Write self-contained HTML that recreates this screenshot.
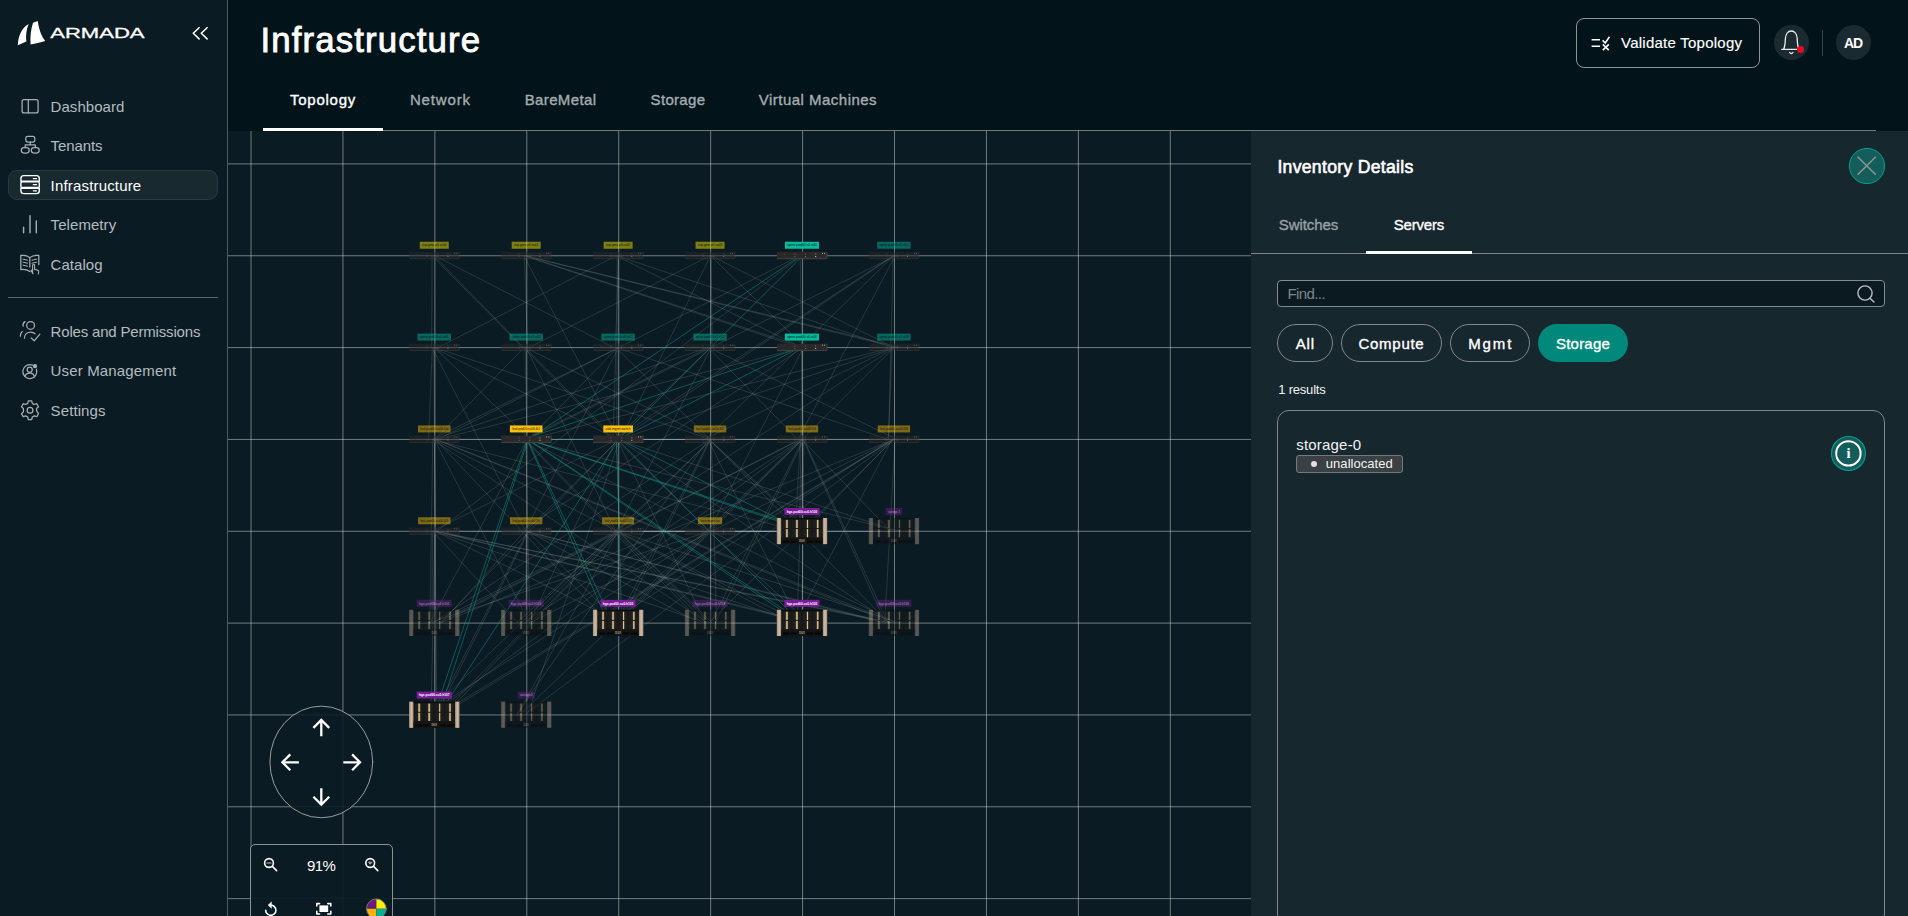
<!DOCTYPE html>
<html lang="en"><head><meta charset="utf-8"><title>Infrastructure</title>
<style>
html,body{margin:0;padding:0}
body{width:1908px;height:916px;overflow:hidden;background:#02131a;position:relative;font-family:"Liberation Sans", sans-serif;}
.t{position:absolute;white-space:nowrap;display:block}
.abs{position:absolute}
svg{position:absolute;overflow:visible}
</style></head><body>

<nav><div class="abs" style="left:0;top:0;width:227px;height:916px;background:#0b1b23;border-right:1px solid #525c61"></div>
<svg style="left:0;top:0" width="227" height="60" viewBox="0 0 227 60">
<path d="M17.8,45.2 C18.2,35.5 22,27.5 28.6,24 C26.3,30 25.6,36 26.4,41.6 Z" fill="#fff"/>
<path d="M33,22.8 L37.7,21 C38.8,29 41.3,36 45.2,41 C40.5,42.6 35.5,43.8 30.6,44.6 C30,37 30.9,29 33,22.8 Z" fill="#fff"/>
<text x="50.2" y="38" font-family="Liberation Sans, sans-serif" font-size="14.9" font-weight="400" fill="#fff" stroke="#fff" stroke-width="0.3" textLength="94.4" lengthAdjust="spacingAndGlyphs">ARMADA</text>
<path d="M199.6,27.2 L193.3,33.3 L199.6,39.4 M207.6,27.2 L201.3,33.3 L207.6,39.4" fill="none" stroke="#fff" stroke-width="1.5"/>
</svg>
<div class="abs" style="left:8px;top:170px;width:208px;height:28px;border:1px solid #2b3a42;border-radius:9px;background:#192930"></div>
<span id="n1" class="t" style="left:50.60px;top:95.90px;height:21px;line-height:21px;font-size:15px;font-weight:400;color:#b4bcc0;letter-spacing:0.039px;">Dashboard</span>
<span id="n2" class="t" style="left:50.60px;top:134.60px;height:21px;line-height:21px;font-size:15px;font-weight:400;color:#b4bcc0;letter-spacing:-0.108px;">Tenants</span>
<span id="n3" class="t" style="left:50.60px;top:174.90px;height:21px;line-height:21px;font-size:15px;font-weight:400;color:#fff;letter-spacing:0.171px;">Infrastructure</span>
<span id="n4" class="t" style="left:50.60px;top:214.40px;height:21px;line-height:21px;font-size:15px;font-weight:400;color:#b4bcc0;letter-spacing:0.071px;">Telemetry</span>
<span id="n5" class="t" style="left:50.60px;top:253.90px;height:21px;line-height:21px;font-size:15px;font-weight:400;color:#b4bcc0;letter-spacing:0.049px;">Catalog</span>
<span id="n6" class="t" style="left:50.60px;top:320.90px;height:21px;line-height:21px;font-size:15px;font-weight:400;color:#b4bcc0;letter-spacing:-0.180px;">Roles and Permissions</span>
<span id="n7" class="t" style="left:50.60px;top:360.40px;height:21px;line-height:21px;font-size:15px;font-weight:400;color:#b4bcc0;letter-spacing:0.157px;">User Management</span>
<span id="n8" class="t" style="left:50.60px;top:399.90px;height:21px;line-height:21px;font-size:15px;font-weight:400;color:#b4bcc0;letter-spacing:0.100px;">Settings</span>
<div class="abs" style="left:8px;top:297px;width:210px;height:1px;background:#5a6469"></div>
<svg style="left:0;top:90px" width="60" height="340" viewBox="0 90 60 340" fill="none" stroke="#a7afb3" stroke-width="1.25" stroke-linecap="round" stroke-linejoin="round">
<!-- dashboard -->
<rect x="22.1" y="99.7" width="16" height="13.2" rx="2"/><path d="M28.3,99.7V112.9"/>
<!-- tenants -->
<rect x="25.8" y="136.3" width="9" height="5.8" rx="2"/><rect x="21.3" y="147.6" width="7.9" height="5.4" rx="2.7"/><rect x="31.3" y="147.6" width="7.9" height="5.4" rx="2.7"/>
<path d="M30.3,142.1V144.9M25.2,147.6V144.9H35.3V147.6"/>
<!-- infrastructure (active) -->
<g stroke="#fff" stroke-width="1.4">
<path d="M20.9,181.2V178.4Q20.9,175.6 23.7,175.6H36.5Q39.3,175.6 39.3,178.4V181.2Z"/>
<rect x="20.9" y="181.9" width="18.4" height="5.6" rx="1"/>
<path d="M20.9,188.2H39.3V190.8Q39.3,193.6 36.5,193.6H23.7Q20.9,193.6 20.9,190.8Z"/>
<path d="M33.3,178.6H36.6M33.3,184.7H36.6M33.3,190.8H36.6" stroke-width="1.2"/>
</g>
<!-- telemetry -->
<path d="M23.6,227.3V232.8M30,215.8V232.8M36.3,221V232.8" stroke-width="1.4"/>
<!-- catalog -->
<path d="M29.8,257.6C27.5,255.6 24,255 20.8,255.4V269.6C24,269.2 27.3,269.8 29.8,271.6M29.8,257.6C32,255.6 35.6,255 38.8,255.4V264.6M29.8,257.6V267"/>
<path d="M23,259.2L27.6,260.2M23,262.2L27.6,263.2M23,265.2L27.6,266.2M32,260.2L36.6,259.2M32,263.2L36.6,262.2" stroke-width="1"/>
<path d="M32.6,272.6V265.3Q32.6,264.2 33.6,264.2Q34.6,264.2 34.6,265.3V269.4L37.8,270.3Q38.9,270.7 38.7,271.9L38.3,274" stroke-width="1.1"/>
<path d="M32.6,269.8L31,270.6L33,273.8" stroke-width="1.1"/>
<!-- roles -->
<circle cx="30.6" cy="325.4" r="3.9"/>
<path d="M24.4,338.2C24.4,334.4 27.2,332 30.6,332C32.3,332 33.9,332.6 35,333.7"/>
<path d="M25,321.6C23.4,322.6 22.7,324.4 23.2,326.2M22.3,331.6C20.9,332.6 20.3,334.2 20.3,336.2"/>
<path d="M31.2,338L34.2,340.8L39.9,334.2"/>
<!-- user mgmt -->
<path d="M32.5,365.1A7,7 0 1 0 36.4,369.2"/>
<circle cx="29.7" cy="369.7" r="2.5"/>
<path d="M25,376.5C25.4,374.2 27.3,373 29.7,373C32.1,373 34,374.2 34.4,376.5"/>
<circle cx="35" cy="366.2" r="1.5" fill="#a7afb3"/>
<!-- settings -->
<circle cx="30" cy="410.2" r="2.9"/>
<path d="M28.3,400.8H31.7L32.3,403.4L34.3,404.5L36.8,403.7L38.5,406.7L36.6,408.5V410.9L38.5,413.7L36.8,416.7L34.3,415.9L32.3,417L31.7,419.6H28.3L27.7,417L25.7,415.9L23.2,416.7L21.5,413.7L23.4,411.9V408.5L21.5,406.7L23.2,403.7L25.7,404.5L27.7,403.4Z"/>
</svg>
</nav>
<header><div class="abs" style="left:228px;top:0;width:1680px;height:131px;background:#02131a"></div>
<span id="title" class="t" style="left:260.60px;top:14.54px;height:49px;line-height:49px;font-size:34.8px;font-weight:400;color:#fff;letter-spacing:1.108px;-webkit-text-stroke:0.84px #fff;">Infrastructure</span>
<div class="abs" style="left:263px;top:130px;width:1613px;height:1px;background:#737b7e"></div>
<div class="abs" style="left:263px;top:128px;width:120px;height:3px;background:#fff"></div>
<span id="tb1" class="t" style="left:290.00px;top:89.10px;height:21px;line-height:21px;font-size:15px;font-weight:400;color:#fff;letter-spacing:0.750px;-webkit-text-stroke:0.36px #fff;">Topology</span>
<span id="tb2" class="t" style="left:409.90px;top:89.10px;height:21px;line-height:21px;font-size:15px;font-weight:400;color:#a5acaf;letter-spacing:0.864px;-webkit-text-stroke:0.36px #a5acaf;">Network</span>
<span id="tb3" class="t" style="left:524.70px;top:89.10px;height:21px;line-height:21px;font-size:15px;font-weight:400;color:#a5acaf;letter-spacing:0.366px;-webkit-text-stroke:0.36px #a5acaf;">BareMetal</span>
<span id="tb4" class="t" style="left:650.60px;top:89.10px;height:21px;line-height:21px;font-size:15px;font-weight:400;color:#a5acaf;letter-spacing:0.309px;-webkit-text-stroke:0.36px #a5acaf;">Storage</span>
<span id="tb5" class="t" style="left:758.80px;top:89.10px;height:21px;line-height:21px;font-size:15px;font-weight:400;color:#a5acaf;letter-spacing:0.478px;-webkit-text-stroke:0.36px #a5acaf;">Virtual Machines</span>
<div class="abs" style="left:1576px;top:18px;width:182px;height:48px;border:1px solid #8d9497;border-radius:8px"></div>
<svg style="left:1586px;top:30px" width="30" height="26" viewBox="1586 30 30 26" fill="none" stroke="#fff" stroke-width="1.5">
<path d="M1591.6,39.7H1600M1591.6,46.3H1600"/>
<path d="M1602.6,40.4L1605.2,43L1609.5,36.8" stroke-width="1.6"/>
<path d="M1602.8,44.4L1608.8,50.2M1608.8,44.4L1602.8,50.2" stroke-width="1.6"/>
</svg>
<span id="vt" class="t" style="left:1621.00px;top:32.30px;height:21px;line-height:21px;font-size:15px;font-weight:400;color:#fff;letter-spacing:0.247px;-webkit-text-stroke:0.15px #fff;">Validate Topology</span>
<div class="abs" style="left:1774px;top:25px;width:35px;height:35px;border-radius:50%;background:#1b2a31"></div>
<svg style="left:1774px;top:25px" width="35" height="35" viewBox="1774 25 35 35" fill="none" stroke="#e9eced" stroke-width="1.3" stroke-linecap="round">
<path d="M1781.8,49.4H1800.6M1783.6,49.2C1785.2,46 1785.2,43 1785.4,38.6C1785.6,34 1788,31 1791.3,31C1794.6,31 1797,34 1797.2,38.6C1797.4,43 1797.4,46 1799,49.2"/>
<path d="M1789.6,52.4Q1791.3,54.6 1793,52.4"/>
<circle cx="1800.5" cy="49.4" r="3.5" fill="#e30d1c" stroke="none"/>
</svg>
<div class="abs" style="left:1822px;top:30px;width:1px;height:26px;background:#39454b"></div>
<div class="abs" style="left:1836px;top:25px;width:35px;height:35px;border-radius:50%;background:#1b2a31"></div>
<span id="ad" class="t" style="left:1844.00px;top:33.15px;height:20px;line-height:20px;font-size:14px;font-weight:700;color:#fff;letter-spacing:-1.200px;">AD</span>
</header>
<main>
<div class="abs" style="left:228px;top:131px;width:1023px;height:785px;overflow:hidden;background:#0b1b23">
<svg style="left:0;top:0" width="1023" height="785" viewBox="228 131 1023 785" font-family="Liberation Sans, sans-serif">
<defs>
<linearGradient id="bz" x1="0" x2="1" y1="0" y2="0"><stop offset="0" stop-color="#9c8a76"/><stop offset="0.5" stop-color="#d2bfa9"/><stop offset="1" stop-color="#a8947e"/></linearGradient>
<linearGradient id="gb" x1="0" x2="1" y1="0" y2="0"><stop offset="0" stop-color="#6e5a38"/><stop offset="0.5" stop-color="#e0cfa8"/><stop offset="1" stop-color="#80683f"/></linearGradient>
<g id="srvd">
<rect x="-25.2" y="-13.1" width="50.4" height="26.2" fill="#171717"/>
<rect x="-25.2" y="-13.1" width="4.4" height="26.2" fill="url(#bz)"/>
<rect x="20.8" y="-13.1" width="4.4" height="26.2" fill="url(#bz)"/>
<rect x="-20.8" y="-13.1" width="41.6" height="1.2" fill="#0c0c0c"/>
<g fill="#1d1d1d"><rect x="-19.6" y="-11.4" width="8.6" height="8.6"/><rect x="-9.6" y="-11.4" width="8.6" height="8.6"/><rect x="0.8" y="-11.4" width="8.6" height="8.6"/><rect x="10.8" y="-11.4" width="8.6" height="8.6"/>
<rect x="-19.6" y="-2.2" width="8.6" height="8.6"/><rect x="-9.6" y="-2.2" width="8.6" height="8.6"/><rect x="0.8" y="-2.2" width="8.6" height="8.6"/><rect x="10.8" y="-2.2" width="8.6" height="8.6"/></g>
<g fill="url(#gb)"><rect x="-16.3" y="-11.2" width="2.4" height="8.2"/><rect x="-6.3" y="-11.2" width="2.4" height="8.2"/><rect x="4.6" y="-11.2" width="1.7" height="8.2"/><rect x="14.6" y="-11.2" width="2.2" height="8.2"/>
<rect x="-16.3" y="-2" width="2.4" height="8.2"/><rect x="-6.3" y="-2" width="2.4" height="8.2"/><rect x="4.6" y="-2" width="1.7" height="8.2"/><rect x="14.6" y="-2" width="2.2" height="8.2"/></g>
<rect x="-20.8" y="6.8" width="41.6" height="6.3" fill="#141414"/>
<g fill="#060606"><rect x="-19" y="9.6" width="6.6" height="2"/><rect x="-11.2" y="9.6" width="6.6" height="2"/><rect x="4.8" y="9.6" width="6.6" height="2"/><rect x="12.6" y="9.6" width="6.6" height="2"/></g>
<text x="0" y="11.4" font-size="2.6" font-weight="700" fill="#b9a98c" text-anchor="middle">DGX</text>
</g>
<g id="swd">
<rect x="-25" y="-3.6" width="50" height="7.2" fill="#292929"/>
<path d="M-25,3.3H25V-3.6" fill="none" stroke="#565656" stroke-width="0.6"/>
<g fill="#7c7c7c"><rect x="-7.5" y="-1.7" width="0.8" height="0.9"/><rect x="3.3" y="-1.7" width="0.8" height="0.9"/><rect x="13.2" y="-2" width="1" height="1.2"/><rect x="-17.6" y="-1.6" width="0.8" height="0.8" opacity="0.5"/></g>
<g fill="#d6d6d6"><rect x="-7.5" y="0.7" width="0.8" height="0.8" opacity="0.6"/><rect x="3.3" y="0.7" width="0.8" height="0.8" opacity="0.7"/><rect x="13.2" y="0.6" width="1" height="1"/><rect x="20" y="-2.6" width="0.9" height="0.9"/><rect x="22.2" y="-2.6" width="0.9" height="0.9"/></g>
<rect x="20.6" y="0.7" width="1.3" height="0.8" fill="#8c1616"/>
</g>
</defs>
<path d="M251.00,131V916M342.93,131V916M434.86,131V916M526.79,131V916M618.72,131V916M710.65,131V916M802.58,131V916M894.51,131V916M986.44,131V916M1078.37,131V916M1170.30,131V916M228,163.91H1251M228,255.75H1251M228,347.59H1251M228,439.43H1251M228,531.27H1251M228,623.11H1251M228,714.95H1251M228,806.79H1251M228,898.63H1251" stroke="#fff" stroke-opacity="0.42" stroke-width="1" fill="none"/>
<g stroke="#d5e2e6" stroke-opacity="0.14" stroke-width="1" fill="none"><path d="M432.1,255.8L431.6,347.6"/><path d="M432.2,255.8L522.7,347.6"/><path d="M434.9,255.8L613.9,347.6"/><path d="M524.5,255.8L527.5,347.6"/><path d="M524.2,255.8L800.2,347.6"/><path d="M525.3,255.8L804.7,347.6"/><path d="M524.9,255.8L896.8,347.6"/><path d="M526.0,255.8L900.9,347.6"/><path d="M616.0,255.8L438.2,347.6"/><path d="M618.7,255.8L615.4,347.6"/><path d="M616.0,255.8L801.8,347.6"/><path d="M617.1,255.8L892.4,347.6"/><path d="M709.8,255.8L528.9,347.6"/><path d="M711.2,255.8L712.2,347.6"/><path d="M710.5,255.8L805.4,347.6"/><path d="M711.1,255.8L893.9,347.6"/><path d="M799.6,255.8L437.9,439.4"/><path d="M800.2,255.8L803.2,439.4"/><path d="M801.7,255.8L436.8,531.3"/><path d="M895.1,255.8L798.0,439.4"/><path d="M893.2,255.8L888.5,439.4"/><path d="M893.7,255.8L705.4,439.4"/><path d="M895.3,255.8L526.8,439.4"/><path d="M432.3,347.6L428.6,439.4"/><path d="M434.6,347.6L529.8,439.4"/><path d="M433.7,347.6L435.6,531.3"/><path d="M432.1,347.6L525.7,531.3"/><path d="M434.7,347.6L711.1,439.4"/><path d="M525.1,347.6L527.0,439.4"/><path d="M525.4,347.6L712.0,439.4"/><path d="M526.2,347.6L615.9,531.3"/><path d="M524.0,347.6L434.7,439.4"/><path d="M618.5,347.6L432.1,439.4"/><path d="M617.4,347.6L528.6,439.4"/><path d="M615.7,347.6L710.1,439.4"/><path d="M618.4,347.6L525.2,531.3"/><path d="M616.6,347.6L888.0,439.4"/><path d="M708.4,347.6L797.7,439.4"/><path d="M709.3,347.6L896.8,439.4"/><path d="M708.3,347.6L524.5,439.4"/><path d="M711.1,347.6L616.0,531.3"/><path d="M708.1,347.6L433.2,439.4"/><path d="M802.3,347.6L437.8,439.4"/><path d="M802.0,347.6L800.9,439.4"/><path d="M803.4,347.6L708.6,531.3"/><path d="M803.0,347.6L520.6,531.3"/><path d="M892.6,347.6L528.1,439.4"/><path d="M893.2,347.6L704.3,439.4"/><path d="M892.0,347.6L888.4,439.4"/><path d="M893.9,347.6L710.6,531.3"/><path d="M894.1,347.6L614.1,531.3"/><path d="M431.8,439.4L800.0,531.3"/><path d="M432.8,439.4L429.8,623.1"/><path d="M434.2,439.4L529.6,623.1"/><path d="M435.4,439.4L608.8,623.1"/><path d="M432.3,439.4L707.7,623.1"/><path d="M433.3,439.4L801.8,623.1"/><path d="M435.5,439.4L891.7,623.1"/><path d="M436.6,439.4L896.3,623.1"/><path d="M434.3,439.4L436.9,714.9"/><path d="M527.1,439.4L429.9,623.1"/><path d="M525.9,439.4L529.8,623.1"/><path d="M524.3,439.4L701.9,623.1"/><path d="M525.4,439.4L706.1,623.1"/><path d="M524.9,439.4L896.8,623.1"/><path d="M708.4,439.4L807.1,531.3"/><path d="M709.3,439.4L810.1,531.3"/><path d="M709.7,439.4L432.8,623.1"/><path d="M711.4,439.4L525.0,623.1"/><path d="M709.8,439.4L616.4,623.1"/><path d="M710.7,439.4L620.0,623.1"/><path d="M711.4,439.4L716.6,623.1"/><path d="M708.1,439.4L799.2,623.1"/><path d="M709.5,439.4L888.9,623.1"/><path d="M711.3,439.4L425.7,714.9"/><path d="M800.3,439.4L795.3,531.3"/><path d="M801.1,439.4L799.3,531.3"/><path d="M799.9,439.4L437.1,623.1"/><path d="M800.6,439.4L440.1,623.1"/><path d="M801.6,439.4L523.5,623.1"/><path d="M801.6,439.4L610.2,623.1"/><path d="M802.6,439.4L614.0,623.1"/><path d="M802.9,439.4L710.7,623.1"/><path d="M803.9,439.4L715.2,623.1"/><path d="M803.1,439.4L797.0,623.1"/><path d="M803.8,439.4L802.0,623.1"/><path d="M803.0,439.4L885.5,623.1"/><path d="M803.8,439.4L888.2,623.1"/><path d="M802.8,439.4L431.3,714.9"/><path d="M893.0,439.4L804.0,531.3"/><path d="M894.1,439.4L440.6,623.1"/><path d="M893.4,439.4L529.6,623.1"/><path d="M892.2,439.4L608.5,623.1"/><path d="M893.6,439.4L708.8,623.1"/><path d="M892.1,439.4L794.9,623.1"/><path d="M895.1,439.4L884.7,623.1"/><path d="M893.3,439.4L437.8,714.9"/><path d="M894.2,439.4L441.4,714.9"/><path d="M434.2,531.3L791.2,531.3"/><path d="M432.5,531.3L431.9,623.1"/><path d="M432.5,531.3L518.3,623.1"/><path d="M435.3,531.3L622.4,623.1"/><path d="M434.3,531.3L706.7,623.1"/><path d="M435.7,531.3L806.3,623.1"/><path d="M436.7,531.3L810.7,623.1"/><path d="M435.0,531.3L890.6,623.1"/><path d="M436.0,531.3L895.0,623.1"/><path d="M434.8,531.3L431.0,714.9"/><path d="M435.6,531.3L434.6,714.9"/><path d="M523.7,531.3L797.7,531.3"/><path d="M524.6,531.3L441.2,623.1"/><path d="M526.3,531.3L526.0,623.1"/><path d="M527.7,531.3L619.3,623.1"/><path d="M527.6,531.3L699.5,623.1"/><path d="M524.7,531.3L798.6,623.1"/><path d="M525.2,531.3L884.8,623.1"/><path d="M526.1,531.3L888.6,623.1"/><path d="M527.6,531.3L434.1,714.9"/><path d="M528.6,531.3L436.7,714.9"/><path d="M618.0,531.3L805.4,531.3"/><path d="M616.3,531.3L432.2,623.1"/><path d="M618.1,531.3L516.3,623.1"/><path d="M617.7,531.3L618.5,623.1"/><path d="M618.2,531.3L709.7,623.1"/><path d="M619.0,531.3L712.2,623.1"/><path d="M616.6,531.3L791.8,623.1"/><path d="M617.2,531.3L900.0,623.1"/><path d="M619.6,531.3L441.2,714.9"/><path d="M620.4,531.3L444.9,714.9"/><path d="M711.4,531.3L519.8,714.9"/><path d="M894.3,439.4L524.1,714.9"/><path d="M618.0,531.3L517.4,714.9"/><path d="M708.4,439.4L516.2,714.9"/><path d="M709.3,531.3L895.6,531.3"/><path d="M801.8,439.4L890.9,531.3"/><path d="M527.7,531.3L901.0,531.3"/><path d="M524.1,439.4L899.9,531.3"/><path d="M709.0,531.3L428.4,623.1"/><path d="M709.9,531.3L619.1,623.1"/><path d="M708.5,531.3L809.6,623.1"/><path d="M707.7,531.3L424.4,714.9"/><path d="M434.3,255.8L613.1,439.4"/><path d="M524.0,255.8L618.9,439.4"/><path d="M617.1,255.8L616.9,439.4"/><path d="M710.5,255.8L620.5,439.4"/><path d="M893.1,255.8L614.7,439.4"/><path d="M894.1,255.8L619.7,439.4"/><path d="M433.1,347.6L617.6,439.4"/><path d="M525.4,347.6L615.8,439.4"/><path d="M615.9,347.6L613.0,439.4"/><path d="M710.3,347.6L615.1,439.4"/><path d="M894.3,347.6L619.1,439.4"/><path d="M617.1,439.4L435.5,439.4"/><path d="M619.3,439.4L708.4,439.4"/><path d="M616.9,439.4L800.0,439.4"/><path d="M616.6,439.4L891.5,439.4"/><path d="M617.2,439.4L432.1,531.3"/><path d="M618.8,439.4L525.6,531.3"/><path d="M616.3,439.4L619.7,531.3"/><path d="M615.7,439.4L709.2,531.3"/><path d="M617.8,439.4L897.9,531.3"/><path d="M618.6,439.4L440.3,623.1"/><path d="M616.2,439.4L529.4,623.1"/><path d="M617.2,439.4L705.5,623.1"/><path d="M619.3,439.4L890.7,623.1"/><path d="M619.5,439.4L527.4,714.9"/></g>
<g stroke="#12a192" stroke-opacity="0.45" stroke-width="1" fill="none"><path d="M800.5,255.8L528.4,439.4"/><path d="M801.3,347.6L522.9,439.4"/><path d="M527.6,439.4L809.5,531.3"/><path d="M528.4,439.4L814.3,531.3"/><path d="M526.9,439.4L608.3,623.1"/><path d="M527.7,439.4L612.8,623.1"/><path d="M527.5,439.4L800.3,623.1"/><path d="M528.2,439.4L804.2,623.1"/><path d="M527.1,439.4L433.9,714.9"/><path d="M528.2,439.4L438.7,714.9"/><path d="M802.7,255.8L618.4,439.4"/><path d="M800.3,347.6L618.7,439.4"/><path d="M618.5,439.4L525.9,439.4"/><path d="M619.5,439.4L803.4,531.3"/><path d="M616.5,439.4L621.7,623.1"/><path d="M617.6,439.4L801.2,623.1"/><path d="M619.0,439.4L438.6,714.9"/></g>
<g opacity="0.47"><use href="#swd" x="434.26" y="255.45"/><rect x="419.76" y="241.75" width="29" height="7" fill="#fff200"/><text x="434.26" y="246.45" font-size="3.5" font-weight="400" fill="#0a0a0a" text-anchor="middle" textLength="24.4" lengthAdjust="spacingAndGlyphs">sup.gmx.p0.su00</text></g>
<g opacity="0.47"><use href="#swd" x="526.19" y="255.45"/><rect x="511.69" y="241.75" width="29" height="7" fill="#fff200"/><text x="526.19" y="246.45" font-size="3.5" font-weight="400" fill="#0a0a0a" text-anchor="middle" textLength="24.4" lengthAdjust="spacingAndGlyphs">sup.gmx.p0.su01</text></g>
<g opacity="0.47"><use href="#swd" x="618.12" y="255.45"/><rect x="603.62" y="241.75" width="29" height="7" fill="#fff200"/><text x="618.12" y="246.45" font-size="3.5" font-weight="400" fill="#0a0a0a" text-anchor="middle" textLength="24.4" lengthAdjust="spacingAndGlyphs">sup.gmx.p0.su02</text></g>
<g opacity="0.47"><use href="#swd" x="710.05" y="255.45"/><rect x="695.55" y="241.75" width="29" height="7" fill="#fff200"/><text x="710.05" y="246.45" font-size="3.5" font-weight="400" fill="#0a0a0a" text-anchor="middle" textLength="24.4" lengthAdjust="spacingAndGlyphs">sup.gmx.p0.su03</text></g>
<g><use href="#swd" x="801.98" y="255.45"/><rect x="784.98" y="241.75" width="34" height="7" fill="#00bd9f"/><text x="801.98" y="246.45" font-size="3.5" font-weight="400" fill="#0a0a0a" text-anchor="middle" textLength="29.4" lengthAdjust="spacingAndGlyphs">spine.pod00.s0.s00</text></g>
<g opacity="0.47"><use href="#swd" x="893.91" y="255.45"/><rect x="877.21" y="241.75" width="33.4" height="7" fill="#00bd9f"/><text x="893.91" y="246.45" font-size="3.5" font-weight="400" fill="#0a0a0a" text-anchor="middle" textLength="28.8" lengthAdjust="spacingAndGlyphs">spine.pod00.s1.s00</text></g>
<g opacity="0.47"><use href="#swd" x="434.26" y="347.29"/><rect x="417.56" y="333.59" width="33.4" height="7" fill="#00bd9f"/><text x="434.26" y="338.29" font-size="3.5" font-weight="400" fill="#0a0a0a" text-anchor="middle" textLength="28.8" lengthAdjust="spacingAndGlyphs">spine.pod00.s0.s01</text></g>
<g opacity="0.47"><use href="#swd" x="526.19" y="347.29"/><rect x="509.49" y="333.59" width="33.4" height="7" fill="#00bd9f"/><text x="526.19" y="338.29" font-size="3.5" font-weight="400" fill="#0a0a0a" text-anchor="middle" textLength="28.8" lengthAdjust="spacingAndGlyphs">spine.pod00.s1.s01</text></g>
<g opacity="0.47"><use href="#swd" x="618.12" y="347.29"/><rect x="601.42" y="333.59" width="33.4" height="7" fill="#00bd9f"/><text x="618.12" y="338.29" font-size="3.5" font-weight="400" fill="#0a0a0a" text-anchor="middle" textLength="28.8" lengthAdjust="spacingAndGlyphs">spine.pod00.s0.s02</text></g>
<g opacity="0.47"><use href="#swd" x="710.05" y="347.29"/><rect x="693.35" y="333.59" width="33.4" height="7" fill="#00bd9f"/><text x="710.05" y="338.29" font-size="3.5" font-weight="400" fill="#0a0a0a" text-anchor="middle" textLength="28.8" lengthAdjust="spacingAndGlyphs">spine.pod00.s1.s02</text></g>
<g><use href="#swd" x="801.98" y="347.29"/><rect x="784.98" y="333.59" width="34" height="7" fill="#00bd9f"/><text x="801.98" y="338.29" font-size="3.5" font-weight="400" fill="#0a0a0a" text-anchor="middle" textLength="29.4" lengthAdjust="spacingAndGlyphs">spine.pod00.s0.s03</text></g>
<g opacity="0.47"><use href="#swd" x="893.91" y="347.29"/><rect x="877.21" y="333.59" width="33.4" height="7" fill="#00bd9f"/><text x="893.91" y="338.29" font-size="3.5" font-weight="400" fill="#0a0a0a" text-anchor="middle" textLength="28.8" lengthAdjust="spacingAndGlyphs">spine.pod00.s1.s03</text></g>
<g opacity="0.47"><use href="#swd" x="434.26" y="439.13"/><rect x="417.96" y="425.43" width="32.6" height="7" fill="#ffc107"/><text x="434.26" y="430.13" font-size="3.5" font-weight="400" fill="#0a0a0a" text-anchor="middle" textLength="28.0" lengthAdjust="spacingAndGlyphs">leaf.pod00.su00.l00</text></g>
<g><use href="#swd" x="526.19" y="439.13"/><rect x="509.89" y="425.43" width="32.6" height="7" fill="#ffc107"/><text x="526.19" y="430.13" font-size="3.5" font-weight="400" fill="#0a0a0a" text-anchor="middle" textLength="28.0" lengthAdjust="spacingAndGlyphs">leaf.pod00.su00.l01</text></g>
<g><use href="#swd" x="618.12" y="439.13"/><rect x="603.32" y="425.43" width="29.6" height="7" fill="#ffc107"/><text x="618.12" y="430.13" font-size="3.5" font-weight="400" fill="#0a0a0a" text-anchor="middle" textLength="25.0" lengthAdjust="spacingAndGlyphs">oob.mgmt.switch</text></g>
<g opacity="0.47"><use href="#swd" x="710.05" y="439.13"/><rect x="693.85" y="425.43" width="32.4" height="7" fill="#ffc107"/><text x="710.05" y="430.13" font-size="3.5" font-weight="400" fill="#0a0a0a" text-anchor="middle" textLength="27.8" lengthAdjust="spacingAndGlyphs">leaf.pod00.su00.l02</text></g>
<g opacity="0.47"><use href="#swd" x="801.98" y="439.13"/><rect x="785.78" y="425.43" width="32.4" height="7" fill="#ffc107"/><text x="801.98" y="430.13" font-size="3.5" font-weight="400" fill="#0a0a0a" text-anchor="middle" textLength="27.8" lengthAdjust="spacingAndGlyphs">leaf.pod00.su00.l03</text></g>
<g opacity="0.47"><use href="#swd" x="893.91" y="439.13"/><rect x="877.71" y="425.43" width="32.4" height="7" fill="#ffc107"/><text x="893.91" y="430.13" font-size="3.5" font-weight="400" fill="#0a0a0a" text-anchor="middle" textLength="27.8" lengthAdjust="spacingAndGlyphs">leaf.pod00.su00.l04</text></g>
<g opacity="0.47"><use href="#swd" x="434.26" y="530.97"/><rect x="418.06" y="517.27" width="32.4" height="7" fill="#ffc107"/><text x="434.26" y="521.97" font-size="3.5" font-weight="400" fill="#0a0a0a" text-anchor="middle" textLength="27.8" lengthAdjust="spacingAndGlyphs">leaf.pod00.su00.l05</text></g>
<g opacity="0.47"><use href="#swd" x="526.19" y="530.97"/><rect x="509.99" y="517.27" width="32.4" height="7" fill="#ffc107"/><text x="526.19" y="521.97" font-size="3.5" font-weight="400" fill="#0a0a0a" text-anchor="middle" textLength="27.8" lengthAdjust="spacingAndGlyphs">leaf.pod00.su00.l06</text></g>
<g opacity="0.47"><use href="#swd" x="618.12" y="530.97"/><rect x="602.12" y="517.27" width="32" height="7" fill="#ffc107"/><text x="618.12" y="521.97" font-size="3.5" font-weight="400" fill="#0a0a0a" text-anchor="middle" textLength="27.4" lengthAdjust="spacingAndGlyphs">leaf.pod00.su00.l07</text></g>
<g opacity="0.47"><use href="#swd" x="710.05" y="530.97"/><rect x="697.95" y="517.27" width="24.2" height="7" fill="#ffc107"/><text x="710.05" y="521.97" font-size="3.5" font-weight="400" fill="#0a0a0a" text-anchor="middle" textLength="19.6" lengthAdjust="spacingAndGlyphs">core.mgmt.sw</text></g>
<g><use href="#srvd" x="801.98" y="531.07"/><rect x="784.38" y="507.97" width="35.2" height="7" fill="#7a1c96"/><text x="801.98" y="512.67" font-size="3.5" font-weight="700" fill="#fff" text-anchor="middle" textLength="30.6" lengthAdjust="spacingAndGlyphs">hgx.pod00.su0.h100</text></g>
<g opacity="0.41"><use href="#srvd" x="893.91" y="531.07"/><rect x="885.61" y="507.97" width="16.6" height="7" fill="#7a1c96"/><text x="893.91" y="512.67" font-size="3.5" font-weight="700" fill="#fff" text-anchor="middle" textLength="12.0" lengthAdjust="spacingAndGlyphs">storage-1</text></g>
<g opacity="0.41"><use href="#srvd" x="434.26" y="622.91"/><rect x="416.76" y="599.81" width="35" height="7" fill="#7a1c96"/><text x="434.26" y="604.51" font-size="3.5" font-weight="700" fill="#fff" text-anchor="middle" textLength="30.4" lengthAdjust="spacingAndGlyphs">hgx.pod00.su0.h101</text></g>
<g opacity="0.41"><use href="#srvd" x="526.19" y="622.91"/><rect x="508.69" y="599.81" width="35" height="7" fill="#7a1c96"/><text x="526.19" y="604.51" font-size="3.5" font-weight="700" fill="#fff" text-anchor="middle" textLength="30.4" lengthAdjust="spacingAndGlyphs">hgx.pod00.su0.h102</text></g>
<g><use href="#srvd" x="618.12" y="622.91"/><rect x="600.52" y="599.81" width="35.2" height="7" fill="#7a1c96"/><text x="618.12" y="604.51" font-size="3.5" font-weight="700" fill="#fff" text-anchor="middle" textLength="30.6" lengthAdjust="spacingAndGlyphs">hgx.pod00.su0.h103</text></g>
<g opacity="0.41"><use href="#srvd" x="710.05" y="622.91"/><rect x="692.55" y="599.81" width="35" height="7" fill="#7a1c96"/><text x="710.05" y="604.51" font-size="3.5" font-weight="700" fill="#fff" text-anchor="middle" textLength="30.4" lengthAdjust="spacingAndGlyphs">hgx.pod00.su0.h104</text></g>
<g><use href="#srvd" x="801.98" y="622.91"/><rect x="784.38" y="599.81" width="35.2" height="7" fill="#7a1c96"/><text x="801.98" y="604.51" font-size="3.5" font-weight="700" fill="#fff" text-anchor="middle" textLength="30.6" lengthAdjust="spacingAndGlyphs">hgx.pod00.su0.h105</text></g>
<g opacity="0.41"><use href="#srvd" x="893.91" y="622.91"/><rect x="876.41" y="599.81" width="35" height="7" fill="#7a1c96"/><text x="893.91" y="604.51" font-size="3.5" font-weight="700" fill="#fff" text-anchor="middle" textLength="30.4" lengthAdjust="spacingAndGlyphs">hgx.pod00.su0.h106</text></g>
<g><use href="#srvd" x="434.26" y="714.75"/><rect x="416.66" y="691.65" width="35.2" height="7" fill="#7a1c96"/><text x="434.26" y="696.35" font-size="3.5" font-weight="700" fill="#fff" text-anchor="middle" textLength="30.6" lengthAdjust="spacingAndGlyphs">hgx.pod00.su0.h107</text></g>
<g opacity="0.41"><use href="#srvd" x="526.19" y="714.75"/><rect x="517.59" y="691.65" width="17.2" height="7" fill="#7a1c96"/><text x="526.19" y="696.35" font-size="3.5" font-weight="700" fill="#fff" text-anchor="middle" textLength="12.6" lengthAdjust="spacingAndGlyphs">storage-0</text></g>
</svg>
<svg style="left:0;top:0" width="1023" height="785" viewBox="228 131 1023 785" fill="none" stroke="#fff" stroke-linecap="round" stroke-linejoin="round">
<ellipse cx="321.3" cy="761.95" rx="51.4" ry="55.8" stroke="#979ea0" stroke-width="1" fill="#0b1b23" fill-opacity="0.88"/>
<g stroke-width="2.3" stroke-linecap="butt" stroke-linejoin="miter">
<path d="M321.3,736.2V720.4M313.4,727.9L321.3,720L329.2,727.9"/>
<path d="M321.3,788.2V804.2M313.4,796.7L321.3,804.6L329.2,796.7"/>
<path d="M298.9,762.3H282.8M290.3,754.4L282.4,762.3L290.3,770.2"/>
<path d="M343.3,762.3H359.6M352.1,754.4L360,762.3L352.1,770.2"/>
</g>
</svg>
<div class="abs" style="left:22px;top:713px;width:141px;height:90px;border:1px solid #8b9295;border-radius:5px;background:rgba(11,27,35,0.93)"></div>
<svg style="left:0;top:0" width="1023" height="785" viewBox="228 131 1023 785" fill="none" stroke="#fff" stroke-linecap="round" stroke-linejoin="round">
<g stroke-width="1.6"><circle cx="269" cy="863" r="4.4"/><path d="M272.4,866.4L276.6,870.6"/><path d="M267,863H271" stroke-width="1.2" stroke="#b9bfc1"/>
<circle cx="370.2" cy="863" r="4.4"/><path d="M373.6,866.4L377.8,870.6"/><path d="M368.6,862.4L370.2,864.2L371.8,862.4Z" stroke-width="0.9" stroke="#aab0b3" fill="#aab0b3"/></g>
<g stroke-width="1.6"><path d="M270.8,905.1A5.1,5.1 0 1 1 265.7,910.2"/><path d="M271.2,902.2L268.2,905.1L271.2,908Z" fill="#fff" stroke-width="0.6"/></g>
<g stroke-width="1.6"><rect x="319.4" y="905.4" width="8.8" height="6.6" fill="#fff" stroke="none"/><path d="M316.8,906V903.6H319.6M327.8,903.6H330.8V906M316.8,911.4V914H319.6M327.8,914H330.8V911.4"/></g>
<g stroke="none"><path d="M376.4,908.8V899.1A9.7,9.7 0 0 0 366.7,908.8Z" fill="#6a1b7f"/><path d="M376.4,908.8V899.1A9.7,9.7 0 0 1 386.1,908.8Z" fill="#fff200"/><path d="M376.4,908.8H366.7A9.7,9.7 0 0 0 376.4,918.5Z" fill="#ffb300"/><path d="M376.4,908.8H386.1A9.7,9.7 0 0 1 376.4,918.5Z" fill="#00b096"/></g>
<circle cx="376.4" cy="908.8" r="9.9" stroke="#8a8f92" stroke-width="0.8"/>
</svg>
<span id="zm" class="t" style="left:79.00px;top:723.50px;height:21px;line-height:21px;font-size:15px;font-weight:400;color:#fff;letter-spacing:-0.616px;">91%</span>
</div>
</main>
<aside><div class="abs" style="left:1251px;top:131px;width:657px;height:785px;background:#17272e"></div>
<span id="inv" class="t" style="left:1277.40px;top:155.00px;height:25px;line-height:25px;font-size:17.6px;font-weight:400;color:#fff;letter-spacing:0.303px;-webkit-text-stroke:0.6px #fff;">Inventory Details</span>
<svg style="left:1846px;top:145px" width="42" height="42" viewBox="1846 145 42 42" fill="none">
<circle cx="1867" cy="166" r="17.6" fill="#155d5a" stroke="#00a392" stroke-width="1"/>
<path d="M1857.6,156.8L1875.8,174.8M1875.8,156.8L1857.6,174.8" stroke="#8b9998" stroke-width="1.4"/>
</svg>
<div class="abs" style="left:1251px;top:253px;width:657px;height:1px;background:#7f878a"></div>
<div class="abs" style="left:1366px;top:251px;width:106px;height:3px;background:#fff"></div>
<span id="sw" class="t" style="left:1278.80px;top:214.30px;height:21px;line-height:21px;font-size:15px;font-weight:400;color:#98a1a4;letter-spacing:-0.090px;-webkit-text-stroke:0.36px #98a1a4;">Switches</span>
<span id="sv" class="t" style="left:1393.70px;top:214.30px;height:21px;line-height:21px;font-size:15px;font-weight:400;color:#fff;letter-spacing:-0.181px;-webkit-text-stroke:0.36px #fff;">Servers</span>
<div class="abs" style="left:1277px;top:280px;width:606px;height:25px;border:1px solid #858c8f;border-radius:4px;background:#0b1a21"></div>
<span id="find" class="t" style="left:1287.40px;top:283.30px;height:21px;line-height:21px;font-size:15px;font-weight:400;color:#7d868a;letter-spacing:-0.581px;">Find...</span>
<svg style="left:1852px;top:282px" width="28" height="24" viewBox="1852 282 28 24" fill="none" stroke="#b9bfc1" stroke-width="1.4" stroke-linecap="round">
<circle cx="1865" cy="293" r="7.1"/><path d="M1870.3,298.4L1874,302"/></svg>
<div class="abs" style="left:1277px;top:324.2px;width:53.8px;height:35.4px;border:1px solid #80888b;border-radius:19px"></div>
<span id="c1" class="t" style="left:1295.80px;top:332.50px;height:21px;line-height:21px;font-size:15px;font-weight:400;color:#fff;letter-spacing:0.764px;-webkit-text-stroke:0.36px #fff;">All</span>
<div class="abs" style="left:1340.8px;top:324.2px;width:98.9px;height:35.4px;border:1px solid #80888b;border-radius:19px"></div>
<span id="c2" class="t" style="left:1358.50px;top:332.50px;height:21px;line-height:21px;font-size:15px;font-weight:400;color:#fff;letter-spacing:0.721px;-webkit-text-stroke:0.36px #fff;">Compute</span>
<div class="abs" style="left:1450.0px;top:324.2px;width:78.0px;height:35.4px;border:1px solid #80888b;border-radius:19px"></div>
<span id="c3" class="t" style="left:1468.30px;top:332.50px;height:21px;line-height:21px;font-size:15px;font-weight:400;color:#fff;letter-spacing:1.833px;-webkit-text-stroke:0.36px #fff;">Mgmt</span>
<div class="abs" style="left:1538.2px;top:324.2px;width:90.3px;height:37.4px;border-radius:19px;background:#00897b"></div>
<span id="c4" class="t" style="left:1555.90px;top:332.50px;height:21px;line-height:21px;font-size:15px;font-weight:400;color:#fff;letter-spacing:0.242px;-webkit-text-stroke:0.36px #fff;">Storage</span>
<span id="res" class="t" style="left:1278.20px;top:380.50px;height:18px;line-height:18px;font-size:13px;font-weight:400;color:#f2f4f4;letter-spacing:-0.193px;">1 results</span>
<div class="abs" style="left:1277px;top:410px;width:606px;height:514px;border:1px solid #80888b;border-radius:12px"></div>
<span id="st0" class="t" style="left:1296.20px;top:434.30px;height:21px;line-height:21px;font-size:15px;font-weight:400;color:#f1f3f3;letter-spacing:0.203px;">storage-0</span>
<div class="abs" style="left:1296px;top:455px;width:105px;height:16px;border:1px solid #747b7e;border-radius:3px;background:#3a4043"></div>
<div class="abs" style="left:1310.5px;top:461px;width:6px;height:6px;border-radius:50%;background:#dfe2e3"></div>
<span id="una" class="t" style="left:1325.80px;top:454.90px;height:18px;line-height:18px;font-size:13px;font-weight:400;color:#f1f3f3;letter-spacing:0.050px;">unallocated</span>
<svg style="left:1828px;top:433px" width="42" height="42" viewBox="1828 433 42 42" fill="none">
<circle cx="1848.5" cy="453.5" r="17" fill="#155d5a" stroke="#009c8b" stroke-width="1.2"/>
<circle cx="1848.4" cy="453.4" r="12.2" stroke="#fff" stroke-width="2"/>
<text x="1848.5" y="458.4" font-family="Liberation Serif, serif" font-size="14.5" font-weight="700" fill="#fff" text-anchor="middle">i</text>
</svg>
</aside>
</body></html>
